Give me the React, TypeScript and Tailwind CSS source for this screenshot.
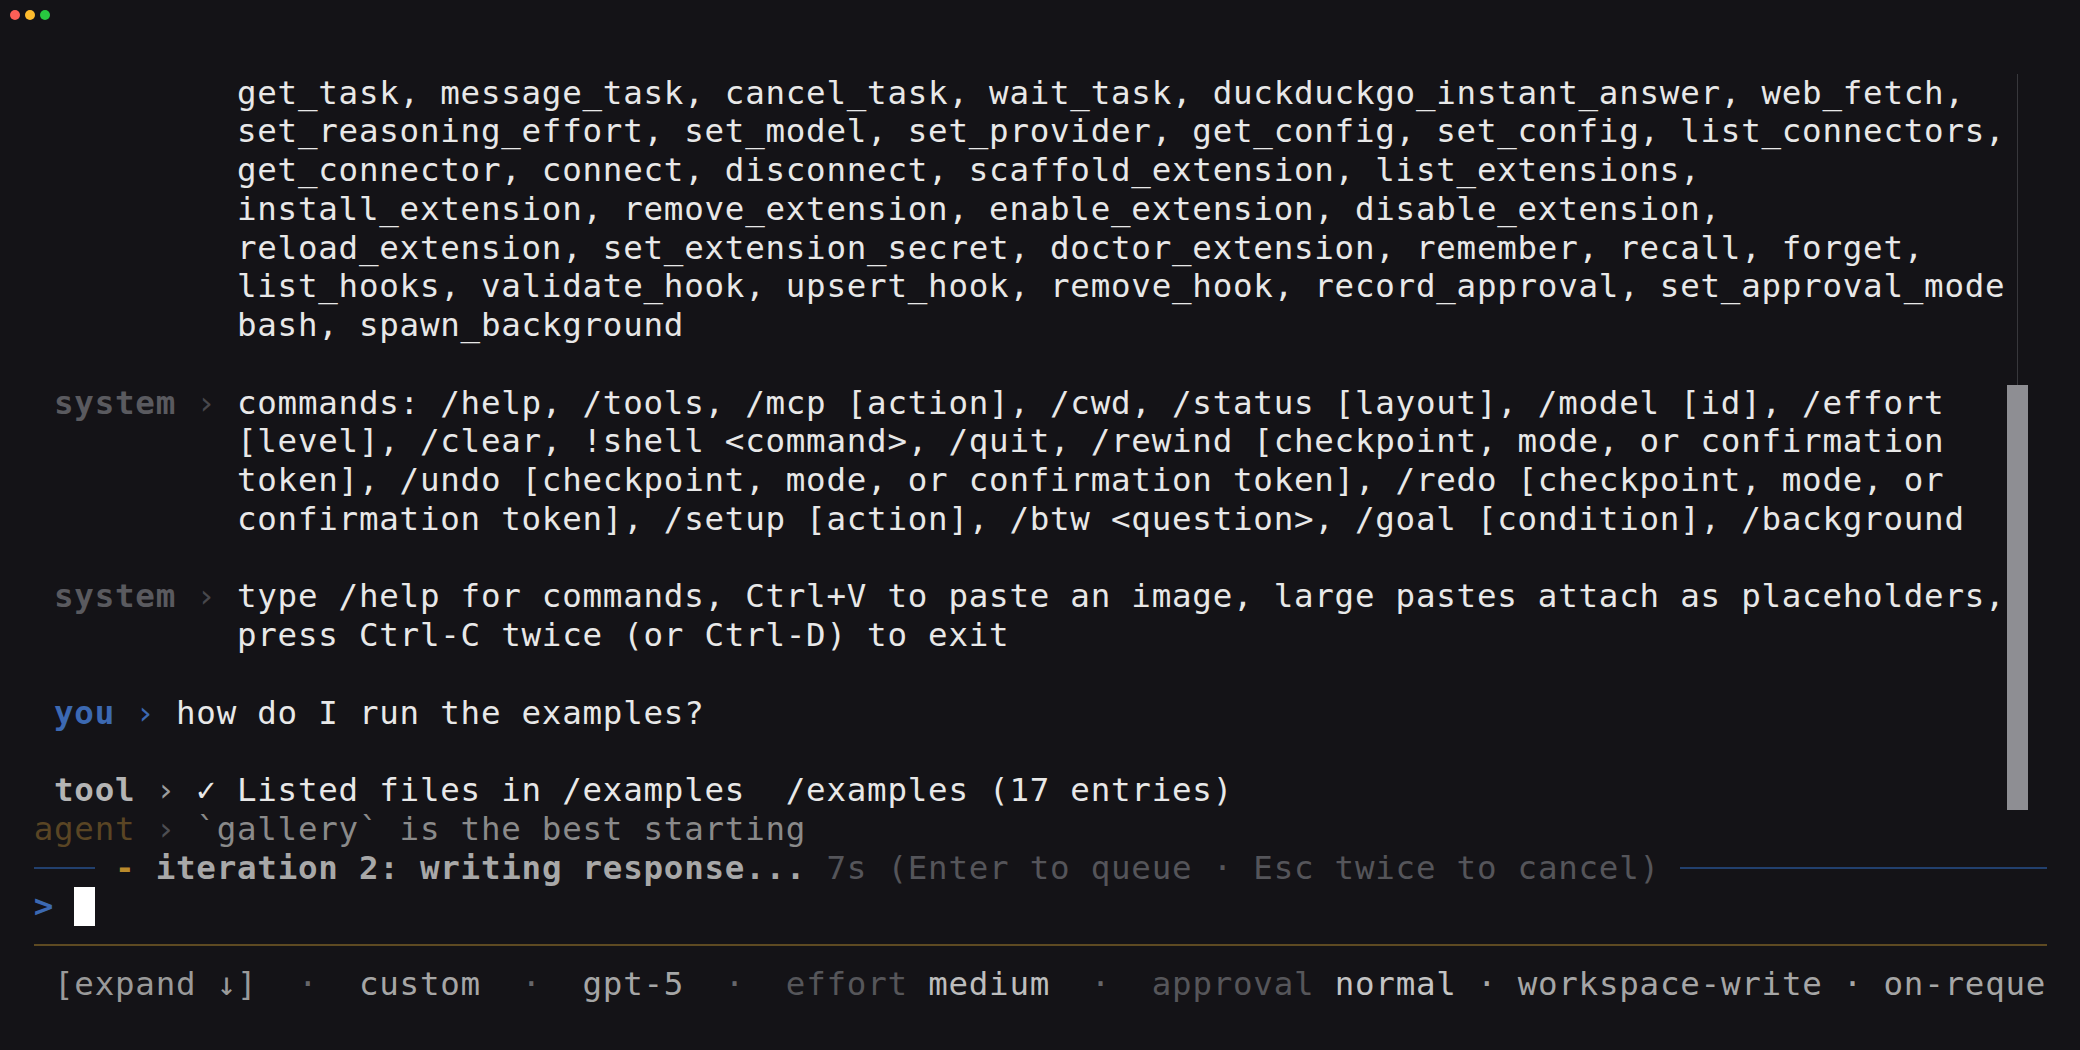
import React from 'react';

const toolLines = [
  'get_task, message_task, cancel_task, wait_task, duckduckgo_instant_answer, web_fetch,',
  'set_reasoning_effort, set_model, set_provider, get_config, set_config, list_connectors,',
  'get_connector, connect, disconnect, scaffold_extension, list_extensions,',
  'install_extension, remove_extension, enable_extension, disable_extension,',
  'reload_extension, set_extension_secret, doctor_extension, remember, recall, forget,',
  'list_hooks, validate_hook, upsert_hook, remove_hook, record_approval, set_approval_mode',
  'bash, spawn_background',
];

const commandLines = [
  'commands: /help, /tools, /mcp [action], /cwd, /status [layout], /model [id], /effort',
  '[level], /clear, !shell <command>, /quit, /rewind [checkpoint, mode, or confirmation',
  'token], /undo [checkpoint, mode, or confirmation token], /redo [checkpoint, mode, or',
  'confirmation token], /setup [action], /btw <question>, /goal [condition], /background',
];

const hintLines = [
  'type /help for commands, Ctrl+V to paste an image, large pastes attach as placeholders,',
  'press Ctrl-C twice (or Ctrl-D) to exit',
];

const INDENT = '          ';

function Row({ children }: { children?: React.ReactNode }) {
  return <div className="h-[38.75px] whitespace-pre">{children}</div>;
}

function SystemBlock({ lines }: { lines: string[] }) {
  return (
    <>
      {lines.map((line, i) =>
        i === 0 ? (
          <Row key={i}>
            {' '}
            <span className="font-bold text-[#5a5a5f]">system</span>
            <span className="text-[#48484c]"> › </span>
            {line}
          </Row>
        ) : (
          <Row key={i}>
            {INDENT}
            {line}
          </Row>
        )
      )}
    </>
  );
}

function Dot() {
  return <span className="text-[#66666a]">·</span>;
}

export default function App() {
  return (
    <div className="h-[1050px] w-full overflow-hidden bg-[#141317] font-['DejaVu_Sans_Mono',monospace] text-[32.5px] leading-[38.75px] tracking-[0.76px] text-[#e8e8e8]">
      <div className="flex h-[30px] items-center gap-[5px] pl-[10px]">
        <span className="h-[10px] w-[10px] rounded-full bg-[#fe5f57]" />
        <span className="h-[10px] w-[10px] rounded-full bg-[#febc2e]" />
        <span className="h-[10px] w-[10px] rounded-full bg-[#28c840]" />
      </div>

      <div className="pl-[33.7px] pt-[43.6px]">
        {/* scrollback viewport */}
        <div className="flex h-[736.25px]">
          <div className="w-[1972px] flex-none overflow-hidden">
            {toolLines.map((line, i) => (
              <Row key={i}>
                {INDENT}
                {line}
              </Row>
            ))}
            <Row />
            <SystemBlock lines={commandLines} />
            <Row />
            <SystemBlock lines={hintLines} />
            <Row />
            <Row>
              {' '}
              <span className="font-bold text-[#3c69b2]">you</span>
              <span className="text-[#3c69b2]"> › </span>
              how do I run the examples?
            </Row>
            <Row />
            <Row>
              {' '}
              <span className="font-bold text-[#b4b4b4]">tool</span>
              <span className="text-[#9c9c9c]"> › </span>✓ Listed files in /examples  /examples (17 entries)
            </Row>
          </div>
          <div className="ml-[1.3px] flex w-[21px] flex-col items-center">
            <div className="w-px flex-1 bg-[#38383c]" />
            <div className="h-[425px] w-[21px] bg-[#8e8e93]" />
          </div>
        </div>

        {/* live area */}
        <div className="w-[2013px]">
          <Row>
            <span className="text-[#5a4524]">agent</span>
            <span className="text-[#4e4e52]"> › </span>
            <span className="text-[#8a8a8a]">`gallery` is the best starting</span>
          </Row>
          <div className="flex h-[38.75px] items-center whitespace-pre">
            <span className="h-[2px] w-[61px] bg-[#22406e]" />
            <span> </span>
            <span className="font-bold text-[#b98a2c]">-</span>
            <span> </span>
            <span className="font-bold text-[#a8a8a8]">iteration 2: writing response...</span>
            <span className="text-[#55555a]"> 7s (Enter to queue · Esc twice to cancel) </span>
            <span className="h-[2px] flex-1 bg-[#22406e]" />
          </div>
          <div className="flex h-[38.75px] items-center whitespace-pre">
            <span className="font-bold text-[#3c69b2]">&gt;</span>
            <span> </span>
            <span className="h-[38.75px] w-[20.33px] bg-white" />
          </div>
          <div className="flex h-[38.75px] items-center">
            <div className="h-[2px] w-full bg-[#5e4a22]" />
          </div>
          <Row>
            {' '}
            <span className="text-[#9a9a9a]">[expand ↓]</span>
            {'  '}
            <Dot />
            {'  '}
            <span className="text-[#a6a6a6]">custom</span>
            {'  '}
            <Dot />
            {'  '}
            <span className="text-[#a6a6a6]">gpt-5</span>
            {'  '}
            <Dot />
            {'  '}
            <span className="text-[#56565a]">effort</span>{' '}
            <span className="text-[#bdbdbd]">medium</span>
            {'  '}
            <Dot />
            {'  '}
            <span className="text-[#56565a]">approval</span>{' '}
            <span className="text-[#c4c4c4]">normal</span>
            <span className="text-[#a6a6a6]"> · workspace-write · on-reque</span>
          </Row>
        </div>
      </div>
    </div>
  );
}
